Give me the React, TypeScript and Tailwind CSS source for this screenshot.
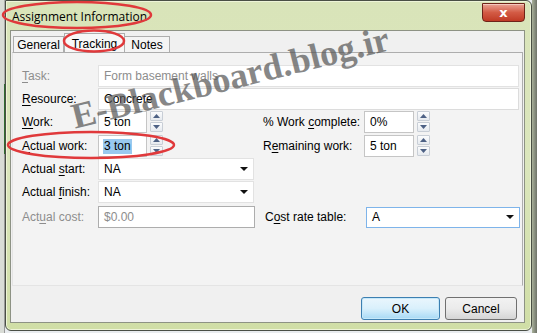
import React from 'react';

const font = { fontFamily: '"Liberation Sans", Arial, sans-serif' };

function Spinner() {
  return (
    <div className="ml-[3px] flex h-[22px] w-[13px] flex-col gap-[1px]">
      <div className="flex h-[10px] items-center justify-center rounded-[1px] border border-[#c8ced6] bg-gradient-to-b from-[#fbfcfd] to-[#e6eaef]">
        <svg width="7" height="4" viewBox="0 0 7 4">
          <path d="M0 4 L3.5 0 L7 4 Z" fill="#4d6185" />
        </svg>
      </div>
      <div className="flex h-[10px] items-center justify-center rounded-[1px] border border-[#c8ced6] bg-gradient-to-b from-[#fbfcfd] to-[#e6eaef]">
        <svg width="7" height="4" viewBox="0 0 7 4">
          <path d="M0 0 L3.5 4 L7 0 Z" fill="#4d6185" />
        </svg>
      </div>
    </div>
  );
}

function Arrow() {
  return (
    <svg width="8" height="4" viewBox="0 0 8 4" className="mr-[5px]">
      <path d="M0 0 L8 0 L4 4 Z" fill="#111" />
    </svg>
  );
}

function Label({ pre, u, post, disabled, w }: { pre: string; u: string; post: string; disabled?: boolean; w: string }) {
  return (
    <div className={`${w} ${disabled ? 'text-[#8d8d8d]' : 'text-black'}`}>
      {pre}
      <span className="underline underline-offset-2">{u}</span>
      {post}
    </div>
  );
}

export default function App() {
  return (
    <div className="relative h-[333px] w-[537px] overflow-hidden bg-[#e9ecef] text-[12px]" style={font}>
      <div className="flex h-full">
        {/* background strip at left */}
        <div className="flex w-[5px] flex-col bg-[#d9dcd6]">
          <div className="h-[84px] border-r border-[#aaa]" />
          <div className="h-[70px] border-r border-[#2f6b2f]" />
          <div className="flex-1 border-r border-[#999]" />
        </div>

        {/* window */}
        <div className="flex h-[331px] w-[527px] flex-col rounded-b-[6px] rounded-tr-[6px] border border-[#4a4f45] bg-gradient-to-b from-[#d9e4b9] via-[#dbe6bc] to-[#d0dea6] shadow-[inset_0_0_0_1px_#eef4d8]">
          <div className="flex h-[29px] items-start">
            <div className="ml-[6px] mt-[7px] text-[12px] text-black" style={{ fontFamily: '"Open Sans", sans-serif' }}>
              Assignment Information
            </div>
            <div className="ml-auto mr-[6px] mt-[2px] flex h-[19px] w-[43px] items-center justify-center rounded-b-[4px] border border-[#6e2318] bg-gradient-to-b from-[#e8a293] via-[#d35b45] to-[#c03a24] shadow-[inset_0_1px_0_#f5c8bd]">
              <span className="text-[13px] font-bold leading-none text-white" style={{ fontFamily: '"DejaVu Sans", sans-serif' }}>
                x
              </span>
            </div>
          </div>

          {/* client area */}
          <div className="ml-[4px] mr-[6px] flex h-[293px] flex-col border border-[#8d9284] bg-[#f0f0f0] px-[1px]">
            {/* tabs */}
            <div className="mt-[2px] flex h-[19px] items-end pl-[1px]">
              <div className="flex h-[16px] w-[51px] items-center justify-center border border-b-0 border-[#adadad] bg-[#f4f4f4]">
                General
              </div>
              <div className="-mb-[1px] flex h-[20px] w-[61px] items-center justify-center border border-b-0 border-[#adadad] bg-[#f7f7f7]">
                Tracking
              </div>
              <div className="flex h-[16px] w-[45px] items-center justify-center border border-b-0 border-l-0 border-[#adadad] bg-[#f4f4f4]">
                Notes
              </div>
            </div>

            {/* panel */}
            <div className="flex h-[234px] flex-col border border-[#e4e4e4] border-t-[#adadad] border-r-[#adadad] bg-[#f3f3f3] pl-[9px]">
              <div className="mt-[12px] flex h-[22px] items-center">
                <Label w="w-[76px]" pre="" u="T" post="ask:" disabled />
                <div className="flex h-[22px] w-[421px] items-center border border-[#e2e2e2] bg-white pl-[5px] text-[#8d8d8d]">
                  Form basement walls
                </div>
              </div>
              <div className="mt-[1px] flex h-[22px] items-center">
                <Label w="w-[76px]" pre="" u="R" post="esource:" />
                <div className="flex h-[22px] w-[421px] items-center border border-[#dcdcdc] bg-white pl-[5px]">Concrete</div>
              </div>
              <div className="mt-[1px] flex h-[22px] items-center">
                <Label w="w-[76px]" pre="" u="W" post="ork:" />
                <div className="flex h-[22px] w-[49px] items-center border border-[#c5c5c5] bg-white pl-[5px]">5 ton</div>
                <Spinner />
                <Label w="ml-[100px] w-[101px]" pre="% Work " u="c" post="omplete:" />
                <div className="flex h-[22px] w-[50px] items-center border border-[#c5c5c5] bg-white pl-[5px]">0%</div>
                <Spinner />
              </div>
              <div className="mt-[2px] flex h-[22px] items-center">
                <Label w="w-[76px]" pre="" u="A" post="ctual work:" />
                <div className="flex h-[22px] w-[49px] items-center border border-[#c5c5c5] bg-white pl-[4px]">
                  <span className="bg-[#99c9ef] px-[1px] leading-[15px]">3 ton</span>
                </div>
                <Spinner />
                <Label w="ml-[100px] w-[101px]" pre="R" u="e" post="maining work:" />
                <div className="flex h-[22px] w-[50px] items-center border border-[#c5c5c5] bg-white pl-[5px]">5 ton</div>
                <Spinner />
              </div>
              <div className="mt-[1px] flex h-[22px] items-center">
                <Label w="w-[76px]" pre="Actual " u="s" post="tart:" />
                <div className="flex h-[22px] w-[156px] items-center justify-between border border-[#e2e2e2] bg-white pl-[5px]">
                  NA
                  <Arrow />
                </div>
              </div>
              <div className="mt-[1px] flex h-[22px] items-center">
                <Label w="w-[76px]" pre="Actual " u="f" post="inish:" />
                <div className="flex h-[22px] w-[156px] items-center justify-between border border-[#e2e2e2] bg-white pl-[5px]">
                  NA
                  <Arrow />
                </div>
              </div>
              <div className="mt-[3px] flex h-[22px] items-center">
                <Label w="w-[76px]" pre="Act" u="u" post="al cost:" disabled />
                <div className="flex h-[22px] w-[157px] items-center border border-[#adadad] bg-white pl-[5px] text-[#8d8d8d]">
                  $0.00
                </div>
                <Label w="ml-[10px] w-[101px]" pre="C" u="o" post="st rate table:" />
                <div className="flex h-[21px] w-[154px] items-center justify-between border border-[#7eb4ea] bg-white pl-[5px]">
                  A
                  <Arrow />
                </div>
              </div>
            </div>

            {/* buttons */}
            <div className="mt-[11px] flex justify-end gap-[5px] pr-[6px]">
              <div className="flex h-[23px] w-[79px] items-center justify-center rounded-[3px] border border-[#3c7fb1] bg-gradient-to-b from-[#eaf6fd] via-[#d9f0fc] to-[#a7d9f5] shadow-[inset_0_0_0_1px_#c6e8f9]">
                OK
              </div>
              <div className="flex h-[23px] w-[72px] items-center justify-center rounded-[3px] border border-[#707070] bg-gradient-to-b from-[#f2f2f2] via-[#ebebeb] to-[#d5d5d5]">
                Cancel
              </div>
            </div>
          </div>
        </div>

        {/* background at right */}
        <div className="flex-1 bg-gradient-to-r from-[#a9b19a] to-[#6f7369]" />
      </div>

      {/* watermark */}
      <div
        className="pointer-events-none absolute left-[72px] top-[90px] whitespace-nowrap text-[36px] font-bold text-[#555] opacity-70"
        style={{ fontFamily: '"Liberation Serif", "Times New Roman", serif', transform: 'rotate(-14deg)', transformOrigin: 'left center' }}
      >
        E-Blackboard.blog.ir
      </div>

      {/* red marks */}
      <svg className="pointer-events-none absolute left-0 top-0" width="537" height="333">
        <ellipse cx="77" cy="15" rx="74" ry="13" fill="none" stroke="#e0393b" strokeWidth="2.5" />
        <ellipse cx="94" cy="41" rx="30" ry="10.5" fill="none" stroke="#e0393b" strokeWidth="2.5" />
        <ellipse cx="91" cy="145" rx="83" ry="13" fill="none" stroke="#e0393b" strokeWidth="2.5" />
      </svg>
    </div>
  );
}
